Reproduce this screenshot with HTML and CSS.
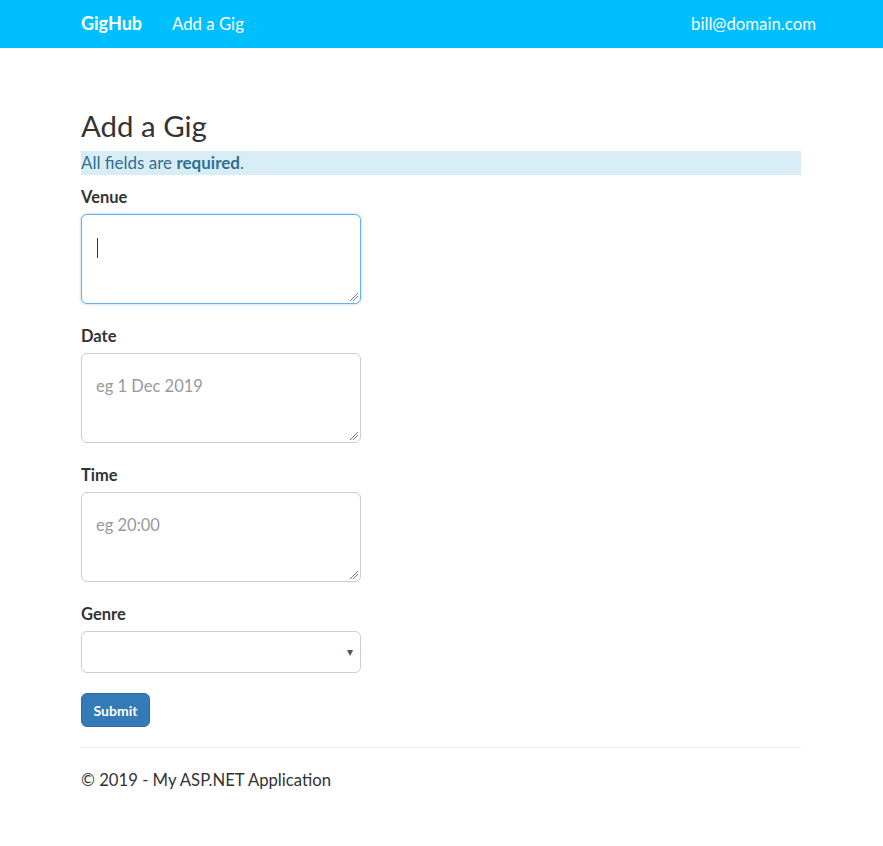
FILE: index.html
```html
<!DOCTYPE html>
<html>
<head>
<meta charset="utf-8">
<title>Add a Gig</title>
<link rel="stylesheet" href="styles.css">
</head>
<body>
<nav class="navbar">
  <div class="container nav-inner">
    <div class="nav-left">
      <a class="brand" href="#">GigHub</a>
      <a class="nav-link" href="#">Add a Gig</a>
    </div>
    <a class="nav-link nav-right" href="#">bill@domain.com</a>
  </div>
</nav>
<main class="container body-content">
  <h2 class="title">Add a Gig</h2>
  <p class="info">All fields are <strong>required</strong>.</p>
  <form class="form">
    <div class="form-group">
      <label class="label">Venue</label>
      <div class="field focused"><span class="caret-line"></span></div>
    </div>
    <div class="form-group">
      <label class="label">Date</label>
      <div class="field"><span class="placeholder">eg 1 Dec 2019</span></div>
    </div>
    <div class="form-group">
      <label class="label">Time</label>
      <div class="field"><span class="placeholder">eg 20:00</span></div>
    </div>
    <div class="form-group">
      <label class="label">Genre</label>
      <div class="select"><span class="arrow">▾</span></div>
    </div>
    <button type="button" class="btn">Submit</button>
  </form>
  <hr class="rule">
  <footer class="footer">&copy; 2019 - My ASP.NET Application</footer>
</main>
</body>
</html>
```

FILE: styles.css
```css
* { box-sizing: border-box; }
html, body { margin: 0; padding: 0; }
body {
  font-family: Lato, "Open Sans", sans-serif;
  font-size: 16px;
  line-height: 1.42857;
  color: #333;
  background: #fff;
}
a { text-decoration: none; }
.container {
  width: 750px;
  margin: 0 auto;
  padding: 0 15.5px 0 14.5px;
}
.navbar {
  background: #00bfff;
  height: 48px;
}
.nav-inner {
  display: flex;
  justify-content: space-between;
  align-items: center;
  height: 48px;
}
.nav-left { display: flex; align-items: center; gap: 30px; }
.brand {
  color: #fff;
  font-weight: 700;
  font-size: 18px;
}
.nav-link {
  color: #fff;
  font-size: 16.8px;
}
.nav-right { margin-right: -15px; }
.body-content {
  padding-top: 61px;
}
.title {
  font-size: 29.4px;
  font-weight: 400;
  margin: 0 0 9px 0;
  line-height: 33px;
  color: #333;
}
.info {
  margin: 0;
  background: #d9edf7;
  color: #31708f;
  font-size: 17px;
  height: 24px;
  line-height: 24px;
}
.info strong { font-weight: 700; }
.form { padding-top: 12px; }
.form-group { margin-bottom: 22px; }
.label {
  display: block;
  font-weight: 700;
  font-size: 16.5px;
  margin-bottom: 6px;
  line-height: 21px;
}
.field {
  width: 280px;
  height: 90px;
  border: 1px solid #ccc;
  border-radius: 6px;
  padding: 20px 14px;
  position: relative;
  background: #fff;
}
.field::after {
  content: "";
  position: absolute;
  right: 2px;
  bottom: 2px;
  width: 8px;
  height: 8px;
  background: linear-gradient(135deg, transparent 45%, #777 45%, #777 52%, transparent 52%, transparent 68%, #777 68%, #777 75%, transparent 75%);
}
.field.focused {
  border-color: #66afe9;
  box-shadow: 0 0 3px rgba(102, 175, 233, 0.6);
}
.caret-line {
  display: block;
  width: 1px;
  height: 20px;
  background: #333;
  margin-left: 1px;
  margin-top: 3px;
}
.placeholder {
  color: #999;
  font-size: 16.5px;
  line-height: 24px;
}
.select {
  width: 280px;
  height: 42px;
  border: 1px solid #ccc;
  border-radius: 6px;
  display: flex;
  justify-content: flex-end;
  align-items: center;
  padding-right: 7px;
}
.arrow {
  font-size: 12px;
  color: #555;
}
.btn {
  display: block;
  background: #337ab7;
  border: 1px solid #2e6da4;
  color: #fff;
  border-radius: 6px;
  font-family: Lato, sans-serif;
  font-size: 14px;
  font-weight: 700;
  width: 69px;
  height: 34px;
  padding: 0;
  margin-top: -2px;
}
.rule {
  border: 0;
  border-top: 1px solid #eee;
  margin: 20px 0 20px 0;
}
.footer {
  font-size: 16.7px;
  line-height: 24px;
}
```
